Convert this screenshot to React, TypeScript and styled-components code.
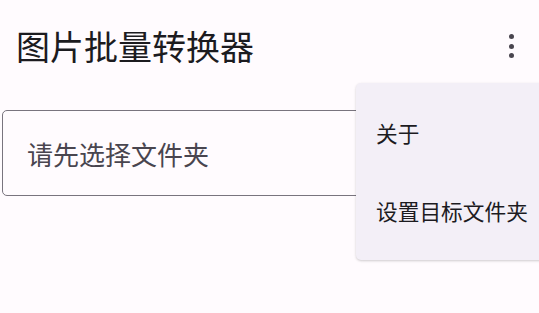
import styled, { createGlobalStyle } from 'styled-components';

const GlobalStyle = createGlobalStyle`
    html, body {
        margin: 0;
        padding: 0;
        background: #fffbfe;
        overflow: hidden;
    }
    body {
        font-family: 'Noto Sans CJK SC', 'Noto Sans', sans-serif;
        color: #1c1b1f;
    }
`;

const Page = styled.div`
    position: relative;
    width: 539px;
    height: 313px;
    background: #fffbfe;
`;

const AppBar = styled.header`
    display: flex;
    align-items: center;
    justify-content: space-between;
    height: 92px;
    padding: 0 23px 0 16px;
    box-sizing: border-box;
`;

const Title = styled.h1`
    margin: 0;
    font-size: 34px;
    font-weight: 400;
    line-height: 1;
    color: #1c1b1f;
`;

const MoreButton = styled.button`
    display: flex;
    flex-direction: column;
    align-items: center;
    gap: 4.5px;
    padding: 0;
    border: none;
    background: none;
    width: 10px;
`;

const Dot = styled.span`
    width: 5px;
    height: 5px;
    border-radius: 50%;
    background: #49454f;
`;

const Body = styled.main`
    padding: 18px 2px 0 2px;
`;

const Field = styled.div`
    display: flex;
    align-items: center;
    height: 86px;
    box-sizing: border-box;
    border: 1px solid #79747e;
    border-radius: 5px;
    padding: 0 24px;
    font-size: 26px;
    color: #49454f;
`;

const Menu = styled.ul`
    position: absolute;
    top: 83px;
    left: 356px;
    width: 190px;
    margin: 0;
    padding: 10px 0 11px;
    list-style: none;
    background: #f3eff7;
    border-radius: 5px;
    box-shadow: 0 1px 3px rgba(0, 0, 0, 0.12), 0 1px 2px rgba(0, 0, 0, 0.08);
`;

const MenuItem = styled.li`
    display: flex;
    align-items: center;
    height: 78px;
    padding: 0 20px;
    font-size: 21.7px;
    color: #1c1b1f;
    white-space: nowrap;
`;

const App = () => {
    return (
        <Page>
            <GlobalStyle />
            <AppBar>
                <Title>图片批量转换器</Title>
                <MoreButton aria-label='more'>
                    <Dot />
                    <Dot />
                    <Dot />
                </MoreButton>
            </AppBar>
            <Body>
                <Field>请先选择文件夹</Field>
            </Body>
            <Menu>
                <MenuItem>关于</MenuItem>
                <MenuItem>设置目标文件夹</MenuItem>
            </Menu>
        </Page>
    );
};

export default App;
